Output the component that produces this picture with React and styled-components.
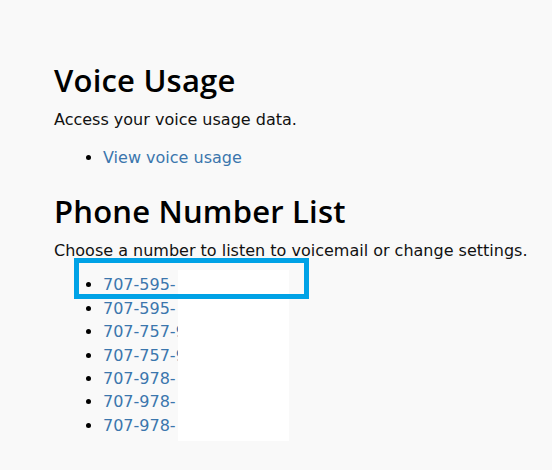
import React from 'react';
import styled, { createGlobalStyle } from 'styled-components';

const GlobalStyle = createGlobalStyle`
  html, body {
    margin: 0;
    padding: 0;
    background: #f9f9f9;
  }
  body {
    font-family: 'DejaVu Sans', 'Liberation Sans', sans-serif;
    color: #111;
  }
`;

const Page = styled.div`
  position: relative;
  width: 552px;
  height: 470px;
  padding: 60px 0 0 54px;
  box-sizing: border-box;
  overflow: hidden;
`;

const Section = styled.section`
  margin-bottom: 22px;
`;

const Heading = styled.h2`
  margin: 0 0 8px 0;
  font-family: 'Open Sans', 'Liberation Sans', sans-serif;
  font-size: 31px;
  font-weight: 600;
  line-height: 40px;
  color: #000;
  letter-spacing: 0.2px;
`;

const Intro = styled.p`
  margin: 0 0 ${p => p.$gap}px 0;
  font-size: 16px;
  line-height: 24px;
`;

const LinkList = styled.ul`
  margin: 0;
  padding-left: 49px;
  list-style: disc;
  font-size: 16px;
  line-height: 23.4px;

  li::marker {
    color: #000;
  }
`;

const Item = styled.li``;

const Link = styled.a`
  color: #3b76ad;
  text-decoration: none;
`;

const Redaction = styled.div`
  position: absolute;
  left: 178px;
  top: 270px;
  width: 111px;
  height: 171px;
  background: #fff;
`;

const Highlight = styled.div`
  position: absolute;
  left: 74px;
  top: 258px;
  width: 235px;
  height: 41px;
  box-sizing: border-box;
  border: 5px solid #00a2e6;
`;

const numbers = ['707-595-', '707-595-', '707-757-9', '707-757-9', '707-978-', '707-978-', '707-978-'];

export default function App() {
  return (
    <>
      <GlobalStyle />
      <Page>
        <Section>
          <Heading>Voice Usage</Heading>
          <Intro $gap={14}>Access your voice usage data.</Intro>
          <LinkList>
            <Item><Link href="#">View voice usage</Link></Item>
          </LinkList>
        </Section>
        <Section>
          <Heading>Phone Number List</Heading>
          <Intro $gap={10}>Choose a number to listen to voicemail or change settings.</Intro>
          <LinkList>
            {numbers.map((n, i) => (
              <Item key={i}><Link href="#">{n}</Link></Item>
            ))}
          </LinkList>
        </Section>
        <Redaction />
        <Highlight />
      </Page>
    </>
  );
}
